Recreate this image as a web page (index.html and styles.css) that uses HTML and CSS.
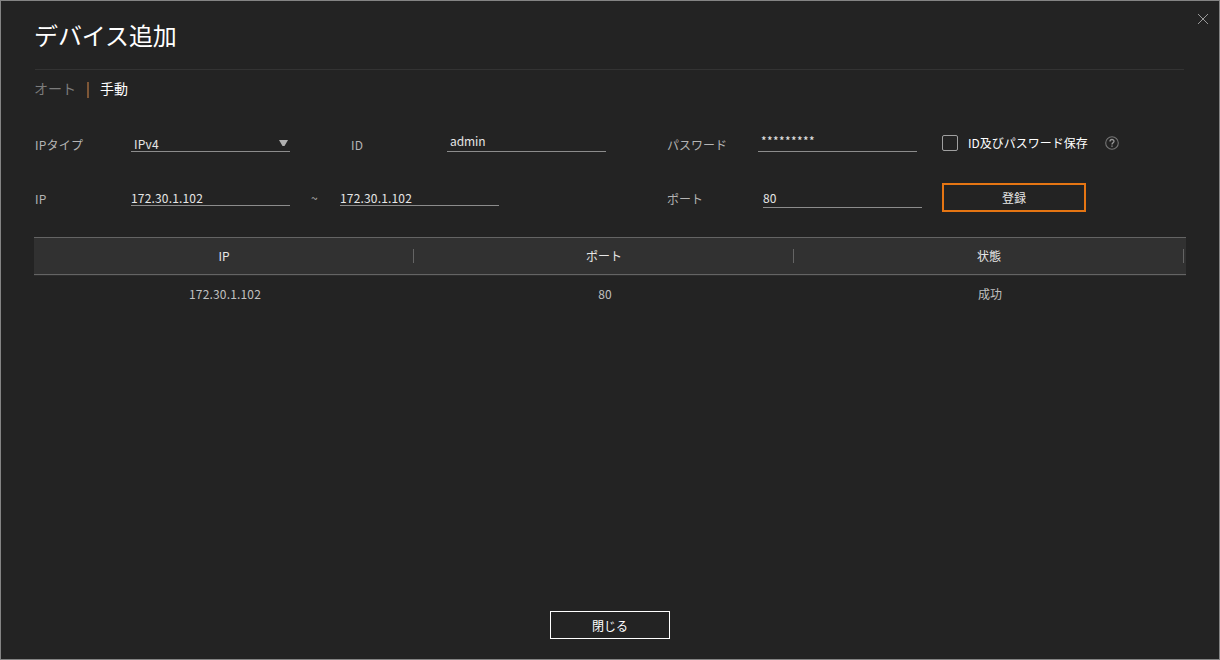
FILE: index.html
```
<!DOCTYPE html>
<html lang="ja">
<head>
<meta charset="utf-8">
<title>デバイス追加</title>
<link rel="stylesheet" href="styles.css">
</head>
<body>
<main class="dialog">
  <header class="header">
    <h1 class="title">デバイス追加</h1>
    <svg class="close" width="10" height="10" viewBox="0 0 10 10"><path d="M0 0L10 10M10 0L0 10"/></svg>
  </header>
  <nav class="tabs">
    <span class="tab">オート</span><span class="tab-divider"></span><span class="tab tab-active">手動</span>
  </nav>
  <div class="form-row row-account">
    <span class="label label-latin">IPタイプ</span>
    <div class="field select"><span>IPv4</span><svg class="arrow" width="9" height="7" viewBox="0 0 9 7"><path d="M0 0H9L5.5 6H3.5Z"/></svg></div>
    <span class="label label-latin label-id">ID</span>
    <div class="field field-id">admin</div>
    <span class="label label-password">パスワード</span>
    <div class="field field-password">*********</div>
    <div class="save"><span class="checkbox"></span><span class="save-text">ID及びパスワード保存</span>
      <svg class="help" width="14" height="14" viewBox="0 0 14 14"><circle cx="7" cy="7" r="6.3"/><path class="help-mark" d="M5 5.5C5 2.9 9 2.9 9 5.2C9 6.8 7 6.7 7 8.5M7 9.5V10.8"/></svg>
    </div>
  </div>
  <div class="form-row row-address">
    <span class="label label-latin">IP</span>
    <div class="field">172.30.1.102</div>
    <span class="tilde">~</span>
    <div class="field">172.30.1.102</div>
    <span class="label label-port">ポート</span>
    <div class="field field-port">80</div>
    <button class="register">登録</button>
  </div>
  <section class="table">
    <div class="table-head">
      <span class="head-cell">IP</span><span class="head-cell">ポート</span><span class="head-cell">状態</span>
    </div>
    <div class="table-row">
      <span class="cell cell-ip">172.30.1.102</span><span class="cell">80</span><span class="cell">成功</span>
    </div>
  </section>
  <footer class="footer"><button class="close-button">閉じる</button></footer>
</main>
</body>
</html>
```
FILE: styles.css
```
* { box-sizing: border-box; }
body { margin: 0; background: #232323; }
.dialog {
  width: 1220px;
  height: 660px;
  display: flex;
  flex-direction: column;
  border: 1px solid #848484;
  background: #232323;
  color: #e6e6e6;
  font: 12px/18px "Noto Sans CJK JP", sans-serif;
}
.header {
  display: flex;
  justify-content: space-between;
  height: 69px;
  margin: 0 35px 0 34px;
  border-bottom: 1px solid #333;
}
.title {
  margin: 16px 0 0 -1px;
  font-size: 24px;
  line-height: 36px;
  font-weight: 400;
  color: #fff;
  letter-spacing: -.1px;
}
.close { margin: 13px -24px 0 0; fill: none; stroke: #999; stroke-width: 1; }
.tabs {
  display: flex;
  align-items: center;
  height: 20px;
  margin: 8px 0 0 33px;
  font-size: 14px;
  line-height: 20px;
}
.tab { color: #7c7c7c; }
.tab-active { color: #fff; }
.tab-divider { width: 2px; height: 16px; margin: 3px 11px 0; background: #7d5636; }
.form-row { display: flex; align-items: flex-start; margin-left: 34px; }
.row-account { height: 52px; margin-top: 32px; }
.row-address { height: 55px; }
.label { width: 96px; padding-top: 6px; color: #b4b4b4; }
.label-latin { letter-spacing: .25px; }
.field {
  width: 159px;
  height: 22px;
  padding-top: 5px;
  border-bottom: 1px solid #8c8c8c;
  letter-spacing: .17px;
}
.row-address .field { height: 24px; padding-top: 7px; }
.row-address .label { padding-top: 8px; }
.select { display: flex; justify-content: space-between; padding: 5px 3px 0; letter-spacing: .2px; }
.arrow { margin: 5px -1px 0 0; fill: #b0b0b0; }
.label-id, .label-password { margin-left: 61px; }
.label-password { width: 91px; }
.field-id { padding: 2px 3px 0; letter-spacing: -.1px; }
.field-password { padding: 2px 3px 0; letter-spacing: .4px; }
.save { display: flex; align-items: center; height: 26px; margin-left: 25px; }
.checkbox { width: 16px; height: 16px; border: 1px solid #a0a0a0; border-radius: 2px; }
.save-text { margin-left: 10px; color: #fff; }
.help { margin-left: 17px; fill: none; stroke: #757575; stroke-width: 1.1; }
.help-mark { stroke: #999; stroke-width: 1.3; }
.tilde { width: 50px; padding-top: 7px; padding-left: 21px; color: #b4b4b4; }
.label-port { margin-left: 168px; }
.row-address .field-port { height: 26px; }
.register {
  width: 144px;
  height: 29px;
  margin: 1px 0 0 20px;
  padding: 0;
  border: 2px solid #e57513;
  background: transparent;
  color: #e6e6e6;
  font: inherit;
}
.table { width: 1152px; margin-left: 33px; }
.table-head, .table-row { display: grid; grid-template-columns: 380px 380px 390px; }
.table-head {
  height: 38px;
  align-items: center;
  border: solid #646464;
  border-width: 1px 0;
  background: #313131;
  box-shadow: 0 1px #2d2d2d;
}
.head-cell {
  height: 14px;
  line-height: 14px;
  padding-left: 1px;
  border-right: 1px solid #646464;
  text-align: center;
}
.table-row { height: 38px; align-items: center; color: #c0c0c0; }
.cell { text-align: center; padding-left: 2px; }
.cell-ip { letter-spacing: .17px; }
.footer { display: flex; justify-content: center; margin-top: auto; padding-bottom: 20px; }
.close-button {
  width: 120px;
  height: 28px;
  padding: 1px 0 0;
  border: 1px solid #fff;
  background: transparent;
  color: #fff;
  font: inherit;
}
```
